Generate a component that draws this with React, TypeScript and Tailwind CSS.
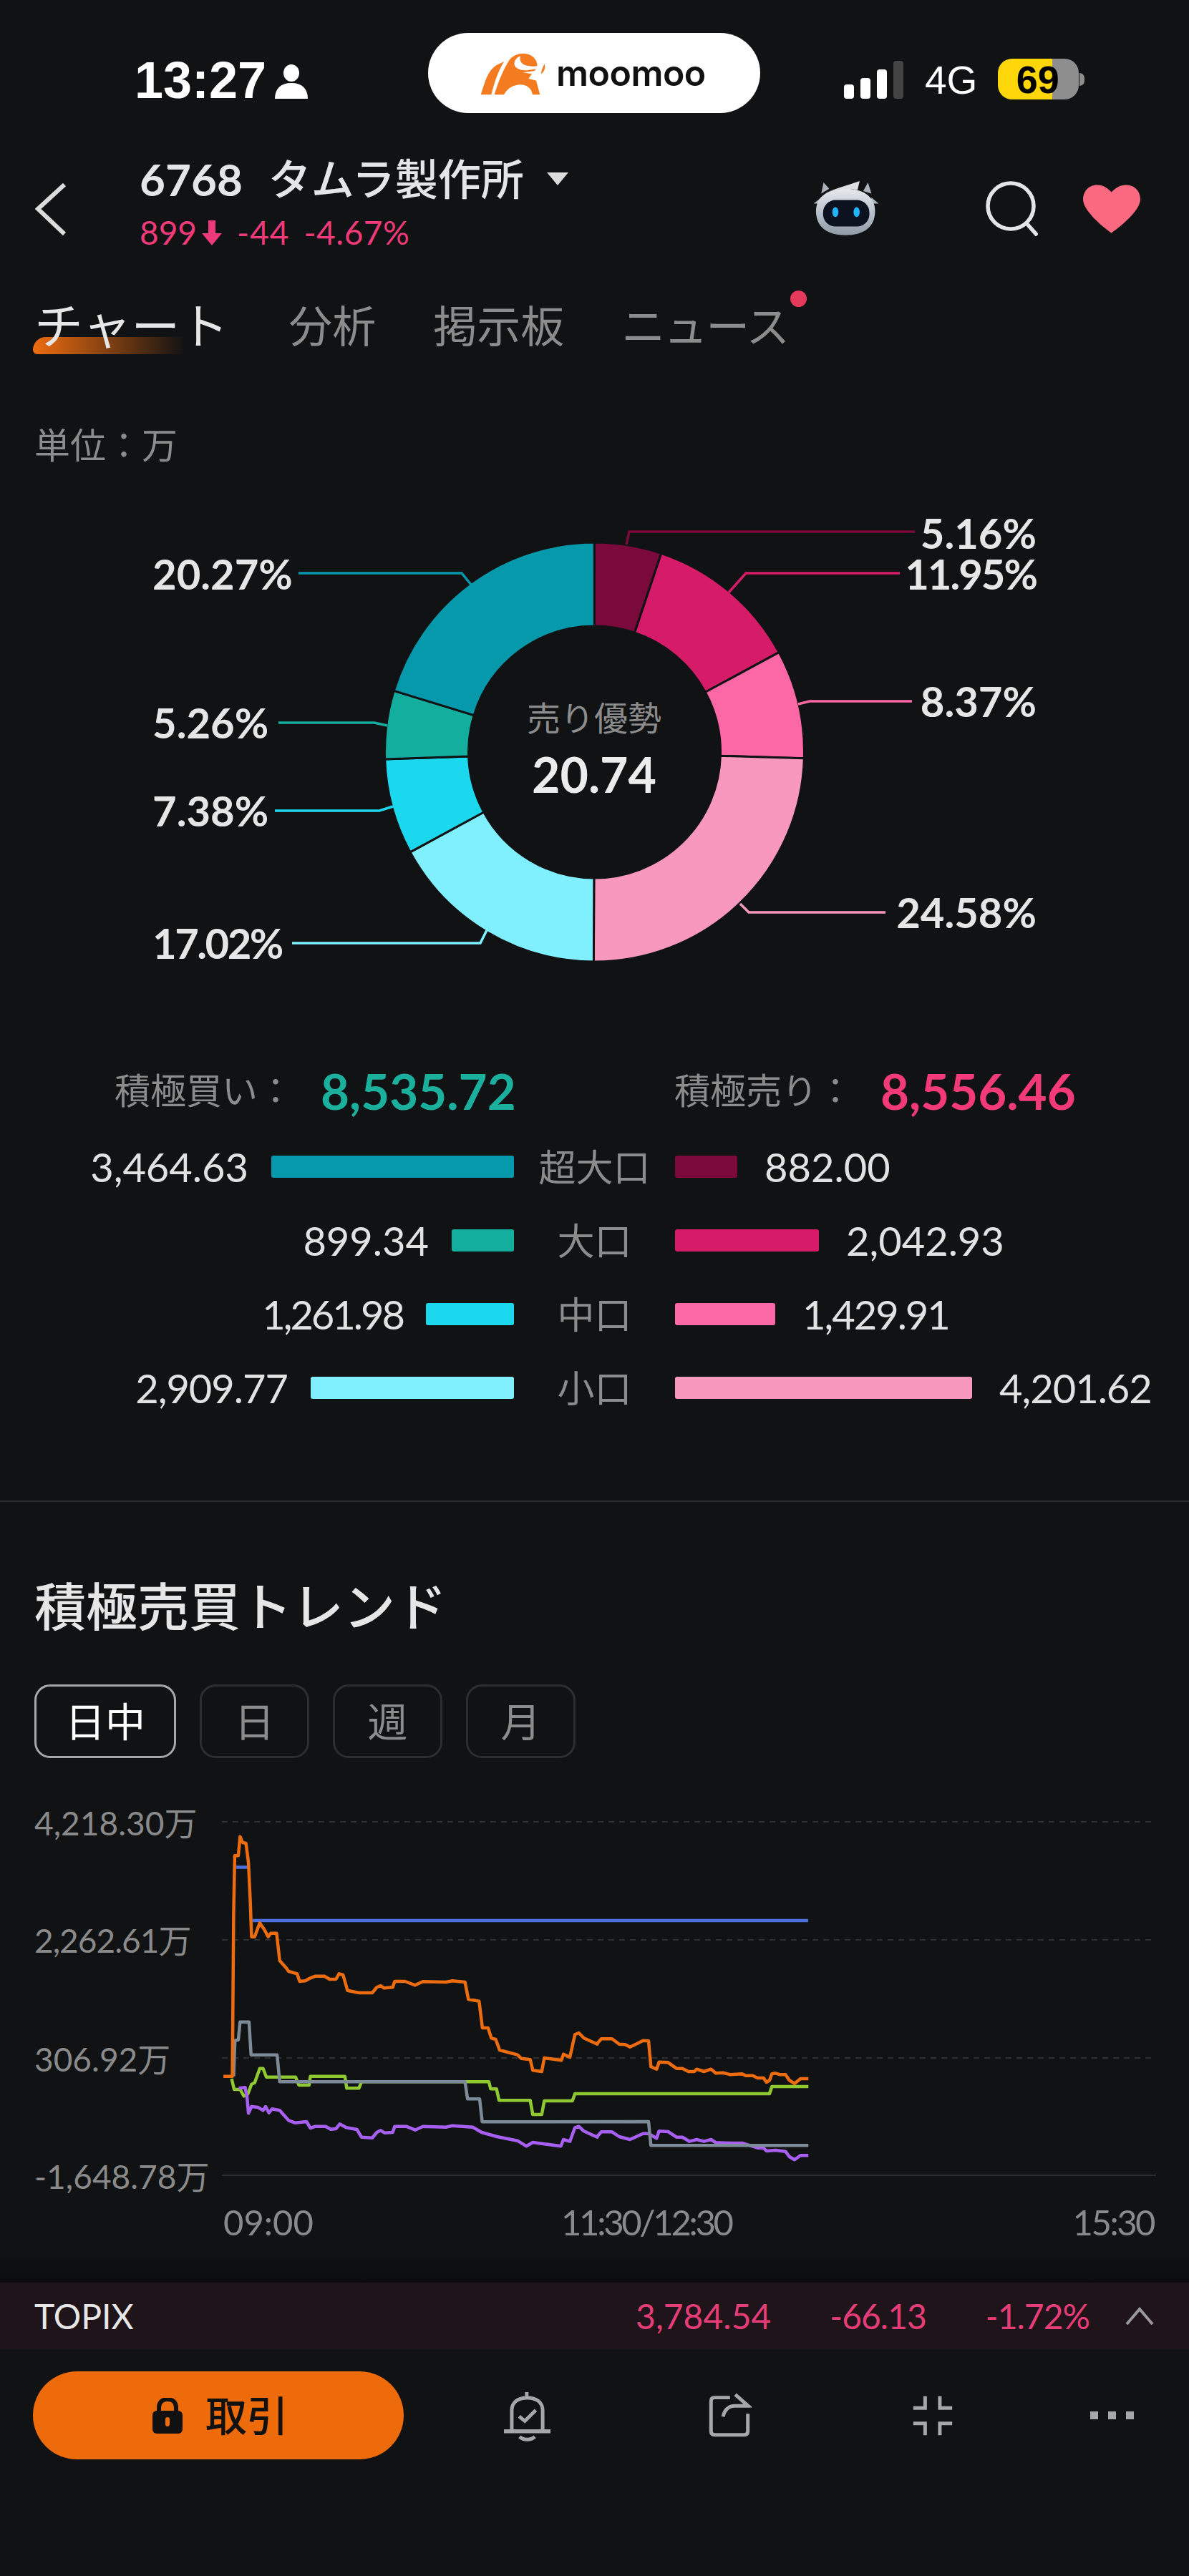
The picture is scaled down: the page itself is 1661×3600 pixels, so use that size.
const z6 = (pts: number[][]) => pts.map(([x, y]) => [280 + x / 2.8, 2540 + y / 3]);
const z7 = (pts: number[][]) => pts.map(([x, y]) => [800 + x / 3, 2700 + y / 3]);
const toPath = (pts: number[][]) => "M" + pts.map(([x, y]) => `${x.toFixed(1)} ${y.toFixed(1)}`).join("L");

const orange = [
  ...z6([[90,1085],[125,1085],[130,400],[134,160],[148,160],[155,80],[165,105],[178,108],[188,190],[195,350],[200,500],[212,500],[232,442],[250,470],[265,500],[275,485],[298,485],[310,600],[335,630],[345,645],[378,655],[388,687],[410,685],[430,673],[450,665],[485,665],[505,678],[530,678],[542,655],[558,660],[575,725],[620,735],[672,735],[690,712],[705,705],[718,715],[752,712],[760,687],[800,687],[840,703],[870,688],[960,690],[985,685],[1035,690],[1048,762],[1090,770],[1103,882],[1125,882],[1138,925],[1155,930],[1170,975],[1240,995],[1255,1010],[1290,1015],[1300,1060],[1335,1065],[1345,1008],[1412,1018],[1420,992],[1445,1005],[1465,910],[1480,903],[1500,925],[1552,950]]),
  ...z7([[105,465],[120,448],[165,448],[195,470],[220,472],[240,482],[270,468],[295,455],[318,457],[328,565],[352,575],[362,545],[400,547],[435,572],[460,572],[485,585],[510,585],[520,575],[550,585],[580,575],[600,592],[630,590],[660,598],[710,595],[725,602],[755,602],[775,612],[800,612],[812,630],[825,622],[835,595],[850,592],[870,598],[892,598],[908,622],[930,635],[955,615],[988,615]]),
];
const green = [
  ...z6([[122,1095],[132,1140],[155,1140],[170,1168],[185,1160],[200,1118],[212,1112],[232,1052],[245,1052],[258,1088],[372,1088],[385,1122],[425,1122],[430,1085],[565,1085],[572,1135],[620,1135],[630,1108],[1128,1108],[1135,1138],[1158,1138],[1168,1186],[1290,1186],[1300,1245],[1335,1245],[1345,1188],[1455,1188],[1465,1158]]),
  ...z7([[825,678],[835,648],[988,648]]),
];
const gray = [
  ...z6([[130,1085],[135,935],[148,932],[155,857],[190,857],[198,995],[300,995],[310,1108],[1035,1108],[1045,1180],[1092,1180],[1102,1276]]),
  ...z7([[318,795],[328,895],[988,895]]),
];
const purple = [
  ...z6([[150,1135],[175,1132],[182,1170],[188,1240],[200,1212],[225,1215],[245,1228],[255,1212],[268,1238],[280,1222],[310,1228],[345,1270],[370,1280],[415,1275],[430,1302],[450,1295],[490,1295],[510,1307],[530,1305],[545,1285],[570,1300],[612,1308],[630,1340],[672,1343],[690,1320],[705,1312],[720,1322],[752,1320],[760,1295],[805,1295],[840,1310],[870,1295],[960,1298],[985,1292],[1065,1298],[1100,1320],[1160,1338],[1240,1355],[1275,1378],[1300,1362],[1410,1378],[1420,1350],[1445,1358],[1465,1300],[1480,1295],[1500,1315],[1552,1340]]),
  ...z7([[105,855],[120,838],[165,838],[195,858],[240,870],[295,845],[318,845],[352,865],[362,835],[400,837],[435,860],[460,860],[490,878],[520,870],[550,878],[580,870],[600,883],[660,885],[710,885],[775,905],[800,905],[812,918],[850,915],[892,920],[908,942],[930,955],[955,937],[988,937]]),
];

const segments = [
  { pct: 5.16, color: "#7a0a3c" },
  { pct: 11.95, color: "#d61c68" },
  { pct: 8.37, color: "#fc67a5" },
  { pct: 24.58, color: "#f998bf" },
  { pct: 17.02, color: "#80f0ff" },
  { pct: 7.38, color: "#1cd8ee" },
  { pct: 5.26, color: "#14ae9f" },
  { pct: 20.27, color: "#0699ab" },
];

function arcPath(start: number, end: number) {
  const cx = 830.5, cy = 1051, r1 = 293, r2 = 176;
  const pt = (a: number, r: number) => {
    const t = (a / 100) * 2 * Math.PI;
    return `${(cx + r * Math.sin(t)).toFixed(2)} ${(cy - r * Math.cos(t)).toFixed(2)}`;
  };
  const large = end - start > 50 ? 1 : 0;
  return `M${pt(start, r1)}A${r1} ${r1} 0 ${large} 1 ${pt(end, r1)}L${pt(end, r2)}A${r2} ${r2} 0 ${large} 0 ${pt(start, r2)}Z`;
}

let acc = 0;
const arcs = segments.map((s) => {
  const d = arcPath(acc, acc + s.pct);
  acc += s.pct;
  return { d, color: s.color };
});

const leaders = [
  { points: "875,761 879,743 1278,743", color: "#7a0a3c" },
  { points: "1018,828 1042,801 1257,801", color: "#d61c68" },
  { points: "1115,984 1131,980 1274,980", color: "#fc67a5" },
  { points: "1034,1263 1046,1275 1237,1275", color: "#f998bf" },
  { points: "658,817 645,801 417,801", color: "#0699ab" },
  { points: "541,1014 523,1010 389,1010", color: "#14ae9f" },
  { points: "549,1127 530,1133 384,1133", color: "#1cd8ee" },
  { points: "680,1300 671,1318 408,1318", color: "#80f0ff" },
];

const rows = [
  { label: "超大口", left: "3,464.63", leftT: "", leftW: "w-[339px]", leftC: "bg-[#0699ab]", right: "882.00", rightT: "", rightW: "w-[87px]", rightC: "bg-[#7a0a3c]" },
  { label: "大口", left: "899.34", leftT: "", leftW: "w-[87px]", leftC: "bg-[#14ae9f]", right: "2,042.93", rightT: "", rightW: "w-[201px]", rightC: "bg-[#d61c68]" },
  { label: "中口", left: "1,261.98", leftT: "tracking-[-3px]", leftW: "w-[123px]", leftC: "bg-[#1cd8ee]", right: "1,429.91", rightT: "tracking-[-2px]", rightW: "w-[140px]", rightC: "bg-[#fc67a5]" },
  { label: "小口", left: "2,909.77", leftT: "tracking-[-1px]", leftW: "w-[284px]", leftC: "bg-[#80f0ff]", right: "4,201.62", rightT: "tracking-[-1px]", rightW: "w-[415px]", rightC: "bg-[#f998bf]" },
];

function Logo() {
  return (
    <svg width="120" height="85" viewBox="0 0 360 255" className="shrink-0">
      <path fill="#f47b20" d="M68 217C85 165 95 120 130 95L165 78C140 120 125 165 112 217Z" />
      <path fill="#f47b20" d="M125 217C140 165 165 105 190 68C220 35 280 35 300 75C306 90 306 100 300 108L285 130L270 150L300 158L316 217L285 217C280 190 260 175 235 175C205 175 180 190 165 217Z" />
      <path fill="#fff" d="M235 55C215 62 205 78 210 95C218 110 240 115 262 115L305 108L310 95C290 100 255 100 240 85C232 75 230 65 235 55Z" />
      <path fill="#fff" d="M245 124L282 130L268 150L296 152L312 112L290 118Z" />
      <path fill="#f47b20" d="M335 88C340 105 335 120 320 130C322 115 328 100 335 88Z" />
    </svg>
  );
}

function Robot() {
  return (
    <svg width="94" height="82" viewBox="175 155 285 245">
      <defs>
        <linearGradient id="head" x1="0" y1="0" x2="0" y2="1">
          <stop offset="0" stopColor="#e6e9ec" />
          <stop offset="0.5" stopColor="#b9c2cc" />
          <stop offset="1" stopColor="#8f9aa6" />
        </linearGradient>
      </defs>
      <path fill="#aab2bb" d="M212 215L222 168L246 195ZM390 205L410 168L425 215Z" />
      <path fill="#a9b6c4" d="M180 258L212 232L215 258ZM455 258L425 232L420 258Z" />
      <path fill="url(#head)" d="M190 290C190 225 245 195 315 195C385 195 440 225 440 290C440 360 390 392 315 392C240 392 190 360 190 290Z" />
      <path fill="#dcdfe2" d="M240 208C285 190 330 178 375 162L366 200C320 192 280 196 240 208Z" />
      <rect x="220" y="243" width="196" height="112" rx="52" fill="#0c1220" />
      <ellipse cx="272" cy="294" rx="13" ry="21" fill="#22b5ff" />
      <ellipse cx="362" cy="294" rx="13" ry="21" fill="#22b5ff" />
    </svg>
  );
}

function Bell() {
  return (
    <svg width="73" height="72" viewBox="60 30 220 215" fill="none" stroke="#a6a7a9" strokeWidth="15">
      <path d="M168 38V60" />
      <path d="M105 200V115C105 80 132 62 170 62C208 62 235 80 235 115V200" />
      <path d="M72 203H268" strokeWidth="17" />
      <path d="M138 226C155 242 185 242 202 226" />
      <path d="M136 140L160 160L206 114" />
    </svg>
  );
}

function ShareIcon() {
  return (
    <svg width="62" height="63" viewBox="925 45 185 190" fill="none" stroke="#a6a7a9" strokeWidth="15">
      <path d="M1020 65H955Q940 65 940 80V207Q940 222 955 222H1080Q1095 222 1095 207V133" />
      <path d="M1042 52L1096 100H1040C1012 100 995 120 991 146" />
    </svg>
  );
}

function CompressIcon() {
  return (
    <svg width="60" height="58" viewBox="100 50 180 175" fill="none" stroke="#a6a7a9" strokeWidth="15">
      <path d="M158 55V105H108M220 55V105H272M108 170H158V220M272 170H220V220" />
    </svg>
  );
}

function ChartLine({ pts, color }: { pts: number[][]; color: string }) {
  return <path d={toPath(pts)} fill="none" stroke={color} strokeWidth="4.5" strokeLinejoin="round" />;
}

export default function App() {
  return (
    <div className="w-[1661px] h-[3600px] flex flex-col bg-[#101214] text-[#e6e6e6] overflow-hidden font-[Lato,'Noto_Sans_CJK_JP',sans-serif]">
      {/* status bar */}
      <div className="h-[180px] flex shrink-0">
        <div className="w-[598px] flex items-start pl-[188px] pt-[74px]">
          <span className="text-[72px] leading-[76px] font-bold text-white font-['Liberation_Sans',sans-serif]">13:27</span>
          <svg width="46" height="48" viewBox="0 0 46 48" className="ml-[12px] mt-[16px]" fill="#fff">
            <ellipse cx="23" cy="12" rx="11" ry="12" />
            <path d="M0 48C0 34 8 26 23 26C38 26 46 34 46 48Z" />
          </svg>
        </div>
        <div className="w-[464px] h-[112px] mt-[46px] rounded-full bg-white flex items-center pl-[51px]">
          <Logo />
          <span className="ml-[8px] text-[50px] font-semibold text-[#111] leading-none font-[Inter,sans-serif] tracking-[-0.5px]">moomoo</span>
        </div>
        <div className="flex items-start pt-[82px] pl-[117px]">
          <div className="flex items-end gap-[9px] h-[56px]">
            <div className="w-[14px] h-[20px] rounded-[4px] bg-white" />
            <div className="w-[14px] h-[29px] rounded-[4px] bg-white" />
            <div className="w-[14px] h-[41px] rounded-[4px] bg-white" />
            <div className="w-[14px] h-[53px] rounded-[4px] bg-[#444]" />
          </div>
          <span className="ml-[30px] mt-[2px] text-[55px] leading-[56px] text-white font-['Liberation_Sans',sans-serif]">4G</span>
          <div className="ml-[29px] w-[113px] h-[57px] rounded-[20px] bg-linear-to-r from-[#ffd60a] from-[67%] to-[#8e8e8e] to-[67%] flex items-center justify-center">
            <span className="text-[54px] leading-[46px] font-bold text-black font-['Liberation_Sans',sans-serif] pr-[2px]">69</span>
          </div>
          <div className="w-[7px] h-[18px] mt-[20px] ml-[1px] rounded-r-full bg-[#8e8e8e]" />
        </div>
      </div>

      {/* stock header */}
      <div className="h-[220px] flex shrink-0 relative">
        <svg width="44" height="74" viewBox="0 0 44 74" className="ml-[49px] mt-[75px]" fill="none" stroke="#dcdcdc" strokeWidth="6">
          <path d="M41 3L4 37L41 72" />
        </svg>
        <div className="ml-[102px] pt-[35px]">
          <div className="h-[70px] flex items-center">
            <span className="text-[62px] leading-none font-bold text-[#e4e5e6]">6768</span>
            <span className="ml-[36px] text-[60px] leading-none font-medium text-[#e4e5e6]">タムラ製作所</span>
            <svg width="32" height="20" viewBox="0 0 32 20" className="ml-[31px]" fill="#dcdcdc">
              <path d="M1 1H31L16 19Z" />
            </svg>
          </div>
          <div className="mt-[10px] h-[60px] flex items-center text-[46px] leading-none text-[#ee3a78]">
            <span>899</span>
            <svg width="30" height="38" viewBox="0 0 30 38" className="ml-[6px]" fill="#ee3a78">
              <path d="M10 2H20V20H29L15 37L1 20H10Z" />
            </svg>
            <span className="ml-[20px] tracking-[1px]">-44</span>
            <span className="ml-[20px] tracking-[0.5px]">-4.67%</span>
          </div>
        </div>
        <div className="ml-auto flex items-start pt-[70px] pr-[68px]">
          <Robot />
          <svg width="78" height="80" viewBox="1370 250 78 80" className="ml-[143px]" fill="none" stroke="#e2e4e6" strokeWidth="5.5">
            <circle cx="1410" cy="288" r="32" />
            <path d="M1432 312L1447 329" />
          </svg>
          <svg width="80" height="68" viewBox="1300 180 238 200" className="ml-[63px] mt-[8px]" fill="#fb6a80">
            <path d="M1418 380C1390 360 1300 290 1300 240C1300 205 1325 180 1358 180C1385 180 1405 195 1418 210C1431 195 1452 180 1480 180C1513 180 1538 205 1538 240C1538 290 1446 360 1418 380Z" />
          </svg>
        </div>
      </div>

      {/* tabs */}
      <div className="h-[110px] flex items-center pl-[48px] gap-[80px] shrink-0 text-[61px] leading-none text-[#8c8c8c]">
        <div className="relative mr-[4px]">
          <div className="absolute left-[-2px] top-[50px] w-[214px] h-[24px] rounded-tl-[24px] rounded-bl-[8px] bg-linear-to-r from-[#ee6c10] to-transparent" />
          <span className="relative text-[68px] text-[#e6e6e6]">チャート</span>
        </div>
        <span>分析</span>
        <span>掲示板</span>
        <div className="relative">
          <span className="tracking-[-2px]">ニュース</span>
          <div className="absolute left-[236px] top-[-19px] w-[23px] h-[23px] rounded-full bg-[#e63a5c]" />
        </div>
      </div>

      <div className="mt-[88px] h-[48px] pl-[48px] text-[50px] leading-[48px] text-[#8c8c8c] shrink-0">単位：万</div>

      {/* donut */}
      <div className="relative h-[843px] shrink-0">
        <svg width="1661" height="843" viewBox="0 646 1661 843" className="block">
          {arcs.map((a) => (
            <path key={a.color} d={a.d} fill={a.color} stroke="#101214" strokeWidth="3" />
          ))}
          {leaders.map((l) => (
            <polyline key={l.color} points={l.points} fill="none" stroke={l.color} strokeWidth="3.5" />
          ))}
        </svg>
        <span className="absolute left-[830px] top-[357px] -translate-x-1/2 -translate-y-1/2 text-[47px] leading-none text-[#8c8c8c] whitespace-nowrap">売り優勢</span>
        <span className="absolute left-[830px] top-[436px] -translate-x-1/2 -translate-y-1/2 text-[68px] leading-none font-bold text-[#ececec]">20.74</span>
        <span className="absolute right-[213px] top-[99px] -translate-y-1/2 text-[58px] leading-[44px] font-bold">5.16%</span>
        <span className="absolute right-[213px] top-[156px] -translate-y-1/2 text-[58px] leading-[44px] font-bold tracking-[-2px]">11.95%</span>
        <span className="absolute right-[213px] top-[334px] -translate-y-1/2 text-[58px] leading-[44px] font-bold">8.37%</span>
        <span className="absolute right-[213px] top-[629px] -translate-y-1/2 text-[58px] leading-[44px] font-bold">24.58%</span>
        <span className="absolute left-[213px] top-[156px] -translate-y-1/2 text-[58px] leading-[44px] font-bold">20.27%</span>
        <span className="absolute left-[213px] top-[364px] -translate-y-1/2 text-[58px] leading-[44px] font-bold">5.26%</span>
        <span className="absolute left-[213px] top-[487px] -translate-y-1/2 text-[58px] leading-[44px] font-bold">7.38%</span>
        <span className="absolute left-[213px] top-[672px] -translate-y-1/2 text-[58px] leading-[44px] font-bold tracking-[-2.5px]">17.02%</span>
      </div>

      {/* totals */}
      <div className="h-[70px] flex items-center shrink-0">
        <div className="w-[942px] pl-[160px] flex items-center">
          <span className="text-[50px] leading-none text-[#8c8c8c]">積極買い：</span>
          <span className="ml-[38px] text-[69px] leading-none font-bold text-[#1bb09e]">8,535.72</span>
        </div>
        <span className="text-[50px] leading-none text-[#8c8c8c]">積極売り：</span>
        <span className="ml-[38px] text-[69px] leading-none font-bold text-[#f33a78]">8,556.46</span>
      </div>

      <div className="mt-[20px] flex flex-col shrink-0">
        {rows.map((r) => (
          <div key={r.label} className="h-[103px] flex items-center">
            <div className="w-[718px] flex items-center justify-end gap-[32px]">
              <span className={`text-[56px] leading-none text-[#e2e2e2] ${r.leftT}`}>{r.left}</span>
              <div className={`h-[31px] rounded-[3px] ${r.leftW} ${r.leftC}`} />
            </div>
            <div className="w-[225px] text-center text-[52px] leading-none text-[#8c8c8c]">{r.label}</div>
            <div className="flex items-center gap-[38px]">
              <div className={`h-[31px] rounded-[3px] ${r.rightW} ${r.rightC}`} />
              <span className={`text-[56px] leading-none text-[#e2e2e2] ${r.rightT}`}>{r.right}</span>
            </div>
          </div>
        ))}
      </div>

      <div className="mt-[106px] h-[2px] bg-[#2a2c2e] shrink-0" />

      {/* trend */}
      <div className="mt-[105px] h-[80px] pl-[48px] text-[72px] leading-[80px] font-medium text-[#e6e6e6] shrink-0">積極売買トレンド</div>

      <div className="mt-[70px] h-[103px] pl-[48px] flex gap-[33px] shrink-0 text-[56px] leading-none">
        <div className="w-[198px] rounded-[22px] border-[3px] border-[#a8a8a8] text-white flex items-center justify-center">日中</div>
        <div className="w-[153px] rounded-[22px] border-[3px] border-[#2c2e31] text-[#8c8c8c] flex items-center justify-center">日</div>
        <div className="w-[153px] rounded-[22px] border-[3px] border-[#2c2e31] text-[#8c8c8c] flex items-center justify-center">週</div>
        <div className="w-[153px] rounded-[22px] border-[3px] border-[#2c2e31] text-[#8c8c8c] flex items-center justify-center">月</div>
      </div>

      <div className="relative h-[733px] shrink-0 text-[46px] leading-none text-[#8a8a8a]">
        <svg width="1661" height="733" viewBox="0 2457 1661 733" className="block">
          <path d="M310 2546H1615M310 2711H1615M310 2876H1615" stroke="#2d2f31" strokeWidth="2" strokeDasharray="8 7" />
          <path d="M310 3040H1615" stroke="#2a2c2e" strokeWidth="2" />
          <path d="M330 2609.5H346M353 2684H1129" stroke="#4a70e0" strokeWidth="4.5" fill="none" />
          <ChartLine pts={green} color="#8fc92f" />
          <ChartLine pts={purple} color="#a860f2" />
          <ChartLine pts={gray} color="#7d8b99" />
          <ChartLine pts={orange} color="#ee6c10" />
        </svg>
        <span className="absolute left-[48px] top-[91px] -translate-y-1/2">4,218.30万</span>
        <span className="absolute left-[48px] top-[255px] -translate-y-1/2 tracking-[-1px]">2,262.61万</span>
        <span className="absolute left-[48px] top-[421px] -translate-y-1/2">306.92万</span>
        <span className="absolute left-[48px] top-[585px] -translate-y-1/2">-1,648.78万</span>
        <span className="absolute left-[312px] top-[648px] -translate-y-1/2 text-[49px]">09:00</span>
        <span className="absolute left-[784px] top-[648px] -translate-y-1/2 text-[49px] tracking-[-3.3px]">11:30/12:30</span>
        <span className="absolute right-[49px] top-[648px] -translate-y-1/2 text-[49px] tracking-[-2.5px]">15:30</span>
        <div className="absolute left-0 right-0 bottom-0 h-[40px] bg-linear-to-b from-transparent to-[#0b0c0d]" />
      </div>

      {/* index bar */}
      <div className="h-[93px] bg-[#1f1419] flex items-center pl-[48px] pr-[49px] text-[48px] leading-none text-[#e53d78] shrink-0">
        <span className="text-[#e6e6e6]">TOPIX</span>
        <span className="ml-auto">3,784.54</span>
        <span className="ml-[82px] tracking-[-1px]">-66.13</span>
        <span className="ml-[83px] tracking-[-1px]">-1.72%</span>
        <svg width="40" height="26" viewBox="0 0 40 26" className="ml-[50px]" fill="none" stroke="#9a9a9a" strokeWidth="4">
          <path d="M2 24L20 3L38 24" />
        </svg>
      </div>

      {/* footer */}
      <div className="mt-[31px] flex items-center shrink-0">
        <div className="ml-[46px] w-[518px] h-[123px] rounded-full bg-[#ed6b0a] flex items-center justify-center gap-[32px] text-[#111]">
          <svg width="42" height="50" viewBox="0 0 42 50" fill="#111" className="ml-[6px]">
            <path d="M9 20V14C9 6 14 2 21 2C28 2 33 6 33 14V20" fill="none" stroke="#111" strokeWidth="6" />
            <rect x="0" y="18" width="42" height="32" rx="6" />
            <rect x="18" y="27" width="6" height="13" rx="3" fill="#ed6b0a" />
          </svg>
          <span className="text-[58px] leading-none font-medium">取引</span>
        </div>
        <div className="ml-[136px]"><Bell /></div>
        <div className="ml-[215px]"><ShareIcon /></div>
        <div className="ml-[223px]"><CompressIcon /></div>
        <div className="ml-[190px] flex gap-[14px]">
          <div className="w-[11px] h-[11px] bg-[#a6a7a9]" />
          <div className="w-[11px] h-[11px] bg-[#a6a7a9]" />
          <div className="w-[11px] h-[11px] bg-[#a6a7a9]" />
        </div>
      </div>
    </div>
  );
}
